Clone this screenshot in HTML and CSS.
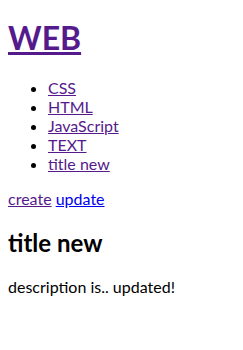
FILE: index.html
```html
<!DOCTYPE html>
<html lang="ko">
<head>
    <meta charset="UTF-8">
    <title>WEB - title new</title>
    <link rel="stylesheet" href="styles.css">
</head>
<body>
    <h1 class="site-title"><a href="index.html" class="visited">WEB</a></h1>
    <ol class="topics">
        <li><a href="#css" class="visited">CSS</a></li>
        <li><a href="#html" class="visited">HTML</a></li>
        <li><a href="#js" class="visited">JavaScript</a></li>
        <li><a href="#text" class="visited">TEXT</a></li>
        <li><a href="#title" class="visited">title new</a></li>
    </ol>
    <a href="#create" class="visited">create</a>
    <a href="#update">update</a>
    <h2>title new</h2>
    <p>description is.. updated!</p>
</body>
</html>
```

FILE: styles.css
```css
body {
    font-family: Lato, "Noto Sans CJK KR", sans-serif;
    color: #000;
}

/* Site title sits a little closer to the top */
.site-title {
    margin-top: 10px;
}

a {
    color: #0000ee;
}

/* links the browser would show as already visited */
a.visited {
    color: #551a8b;
}

.topics {
    list-style: disc;
}
```
